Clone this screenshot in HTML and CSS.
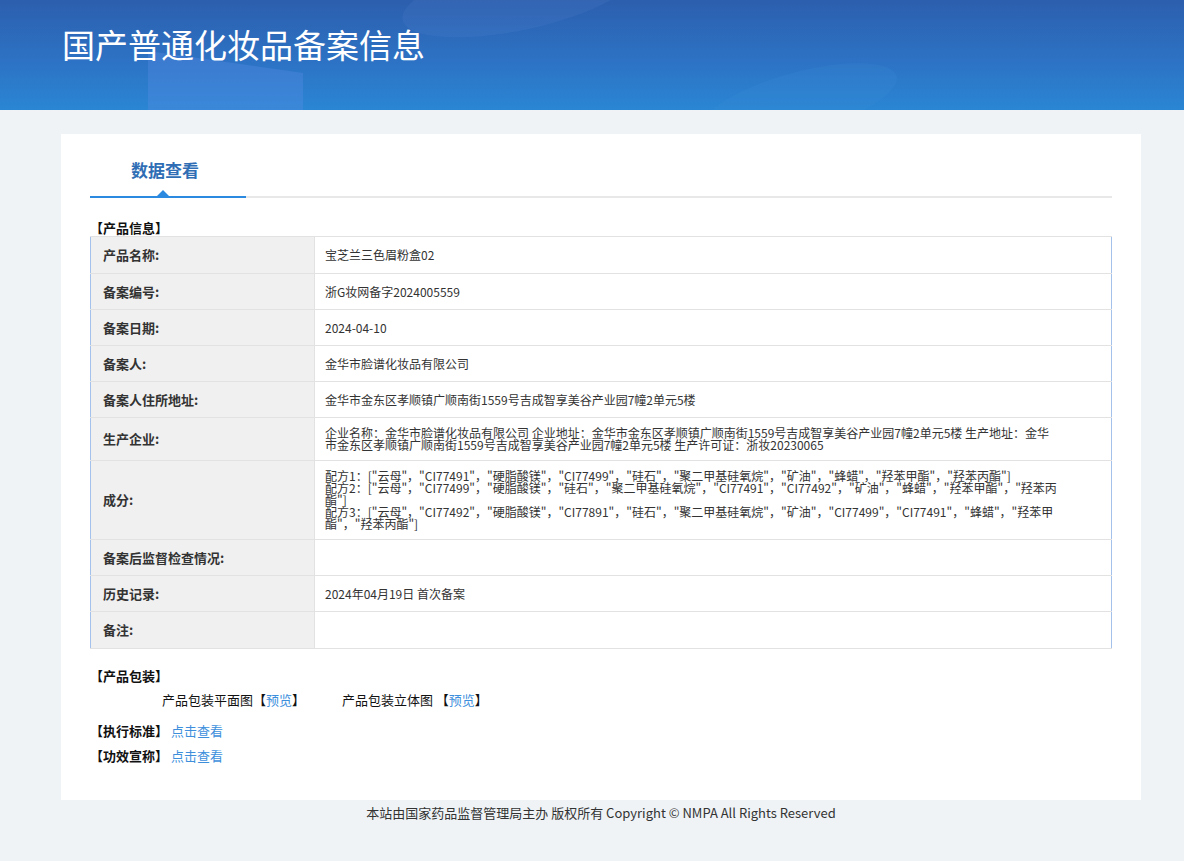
FILE: index.html
```html
<!DOCTYPE html>
<html lang="zh-CN">
<head>
    <meta charset="UTF-8">
    <meta name="viewport" content="width=device-width, initial-scale=1.0">
    <title>国产普通化妆品备案信息</title>
    <link rel="stylesheet" href="styles.css">
</head>
<body>

<div class="header">
    <div class="header-deco deco1"></div>
    <div class="header-deco deco2"></div>
    <div class="header-deco deco3"></div>
    <div class="wrap">
        <h1 class="page-title">国产普通化妆品备案信息</h1>
    </div>
</div>

<div class="wrap">
    <div class="card">

        <div class="tabs">
            <div class="tab active">数据查看</div>
        </div>

        <div class="section-title">【产品信息】</div>
        <table class="info">
            <tr class="edge">
                <td class="label">产品名称:</td>
                <td class="value">宝芝兰三色眉粉盒02</td>
            </tr>
            <tr>
                <td class="label">备案编号:</td>
                <td class="value">浙G妆网备字2024005559</td>
            </tr>
            <tr>
                <td class="label">备案日期:</td>
                <td class="value">2024-04-10</td>
            </tr>
            <tr>
                <td class="label">备案人:</td>
                <td class="value">金华市脸谱化妆品有限公司</td>
            </tr>
            <tr>
                <td class="label">备案人住所地址:</td>
                <td class="value">金华市金东区孝顺镇广顺南街1559号吉成智享美谷产业园7幢2单元5楼</td>
            </tr>
            <tr>
                <td class="label">生产企业:</td>
                <td class="value">企业名称：金华市脸谱化妆品有限公司 企业地址：金华市金东区孝顺镇广顺南街1559号吉成智享美谷产业园7幢2单元5楼 生产地址：金华市金东区孝顺镇广顺南街1559号吉成智享美谷产业园7幢2单元5楼 生产许可证：浙妆20230065</td>
            </tr>
            <tr>
                <td class="label">成分:</td>
                <td class="value">
                    <div>配方1：["云母"，"CI77491"，"硬脂酸镁"，"CI77499"，"硅石"，"聚二甲基硅氧烷"，"矿油"，"蜂蜡"，"羟苯甲酯"，"羟苯丙酯"]</div>
                    <div>配方2：["云母"，"CI77499"，"硬脂酸镁"，"硅石"，"聚二甲基硅氧烷"，"CI77491"，"CI77492"，"矿油"，"蜂蜡"，"羟苯甲酯"，"羟苯丙酯"]</div>
                    <div>配方3：["云母"，"CI77492"，"硬脂酸镁"，"CI77891"，"硅石"，"聚二甲基硅氧烷"，"矿油"，"CI77499"，"CI77491"，"蜂蜡"，"羟苯甲酯"，"羟苯丙酯"]</div>
                </td>
            </tr>
            <tr>
                <td class="label">备案后监督检查情况:</td>
                <td class="value"></td>
            </tr>
            <tr>
                <td class="label">历史记录:</td>
                <td class="value">2024年04月19日 首次备案</td>
            </tr>
            <tr class="edge">
                <td class="label">备注:</td>
                <td class="value"></td>
            </tr>
        </table>

        <div class="section-title pack-title">【产品包装】</div>
        <div class="pack-row">
            <span class="pack-item">产品包装平面图【<a href="#">预览</a>】</span>
            <span class="pack-item">产品包装立体图 【<a href="#">预览</a>】</span>
        </div>

        <div class="link-row first"><b>【执行标准】</b> <a href="#">点击查看</a></div>
        <div class="link-row"><b>【功效宣称】</b> <a href="#">点击查看</a></div>

    </div>

    <div class="footer">本站由国家药品监督管理局主办 版权所有 Copyright © NMPA All Rights Reserved</div>
</div>

</body>
</html>
```

FILE: styles.css
```css
body {
    margin: 0;
    padding: 0;
    background: #eff3f6;
    font-family: "Noto Sans CJK SC", "Microsoft YaHei", sans-serif;
    color: #333;
    font-size: 12px;
}

a {
    color: #3d8fdc;
    text-decoration: none;
}

.wrap {
    width: 1080px;
    margin-left: 61px;
    position: relative;
}

/* cabecera azul */
.header {
    height: 110px;
    position: relative;
    overflow: hidden;
    background: linear-gradient(180deg, #2c5fae 0%, #2d72c4 55%, #2a86d3 100%);
}

.header-deco {
    position: absolute;
    pointer-events: none;
}

.deco1 {
    left: 148px;
    top: 62px;
    width: 155px;
    height: 60px;
    background: rgba(90, 140, 230, 0.35);
    transform: skewY(8deg);
}

.deco2 {
    left: 400px;
    top: -40px;
    width: 240px;
    height: 70px;
    border-radius: 50%;
    background: rgba(120, 160, 230, 0.1);
    transform: rotate(-12deg);
}

.deco3 {
    left: 700px;
    top: 72px;
    width: 200px;
    height: 60px;
    border-radius: 50%;
    background: rgba(70, 150, 220, 0.15);
    transform: rotate(-15deg);
}

.page-title {
    margin: 0;
    padding-top: 23px;
    padding-left: 1px;
    font-size: 33px;
    line-height: 42px;
    font-weight: normal;
    color: #fff;
}

/* tarjeta principal */
.card {
    margin-top: 24px;
    background: #fff;
    padding: 0 29px 34px;
    height: 666px;
    box-sizing: border-box;
}

.tabs {
    display: flex;
    border-bottom: 2px solid #e8e8e8;
}

.tab {
    width: 156px;
    text-align: center;
    text-indent: -6px;
    padding-top: 26px;
    padding-bottom: 16px;
    line-height: 20px;
    font-size: 17px;
    font-weight: bold;
    color: #2f6eb5;
    position: relative;
    margin-bottom: -2px;
}

.tab.active {
    border-bottom: 2px solid #2b8ae0;
}

.tab.active::after {
    content: "";
    position: absolute;
    left: 67px;
    bottom: 0;
    border-left: 6px solid transparent;
    border-right: 6px solid transparent;
    border-bottom: 6px solid #2b8ae0;
}

.section-title {
    margin-top: 21px;
    font-size: 13px;
    font-weight: bold;
    line-height: 17px;
    color: #111;
}

.info {
    width: 100%;
    border-collapse: collapse;
    border: 1px solid #a3c1ea;
}

.info td {
    border-top: 1px solid #e2e2e2;
    border-bottom: 1px solid #e2e2e2;
    height: 17px;
    padding: 9px 10px;
    line-height: 12px;
    vertical-align: middle;
}

.info tr.edge td {
    height: 18px;
}

.info .label {
    width: 201px;
    padding-left: 12px;
    background: #f0f0f0;
    border-right: 1px solid #e2e2e2;
    font-size: 13px;
    font-weight: bold;
    color: #333;
}

.info .value {
    padding-right: 52px;
    color: #333;
}

.pack-title {
    margin-top: 18px;
}

.pack-row {
    margin-top: 7px;
    padding-left: 72px;
    font-size: 13px;
    line-height: 17px;
    color: #111;
}

.pack-item {
    display: inline-block;
    width: 177px;
}

.link-row {
    margin-top: 8px;
    font-size: 13px;
    line-height: 17px;
    color: #111;
}

.link-row.first {
    margin-top: 14px;
}

.footer {
    text-align: center;
    font-size: 13px;
    line-height: 26px;
    color: #333;
}
```
